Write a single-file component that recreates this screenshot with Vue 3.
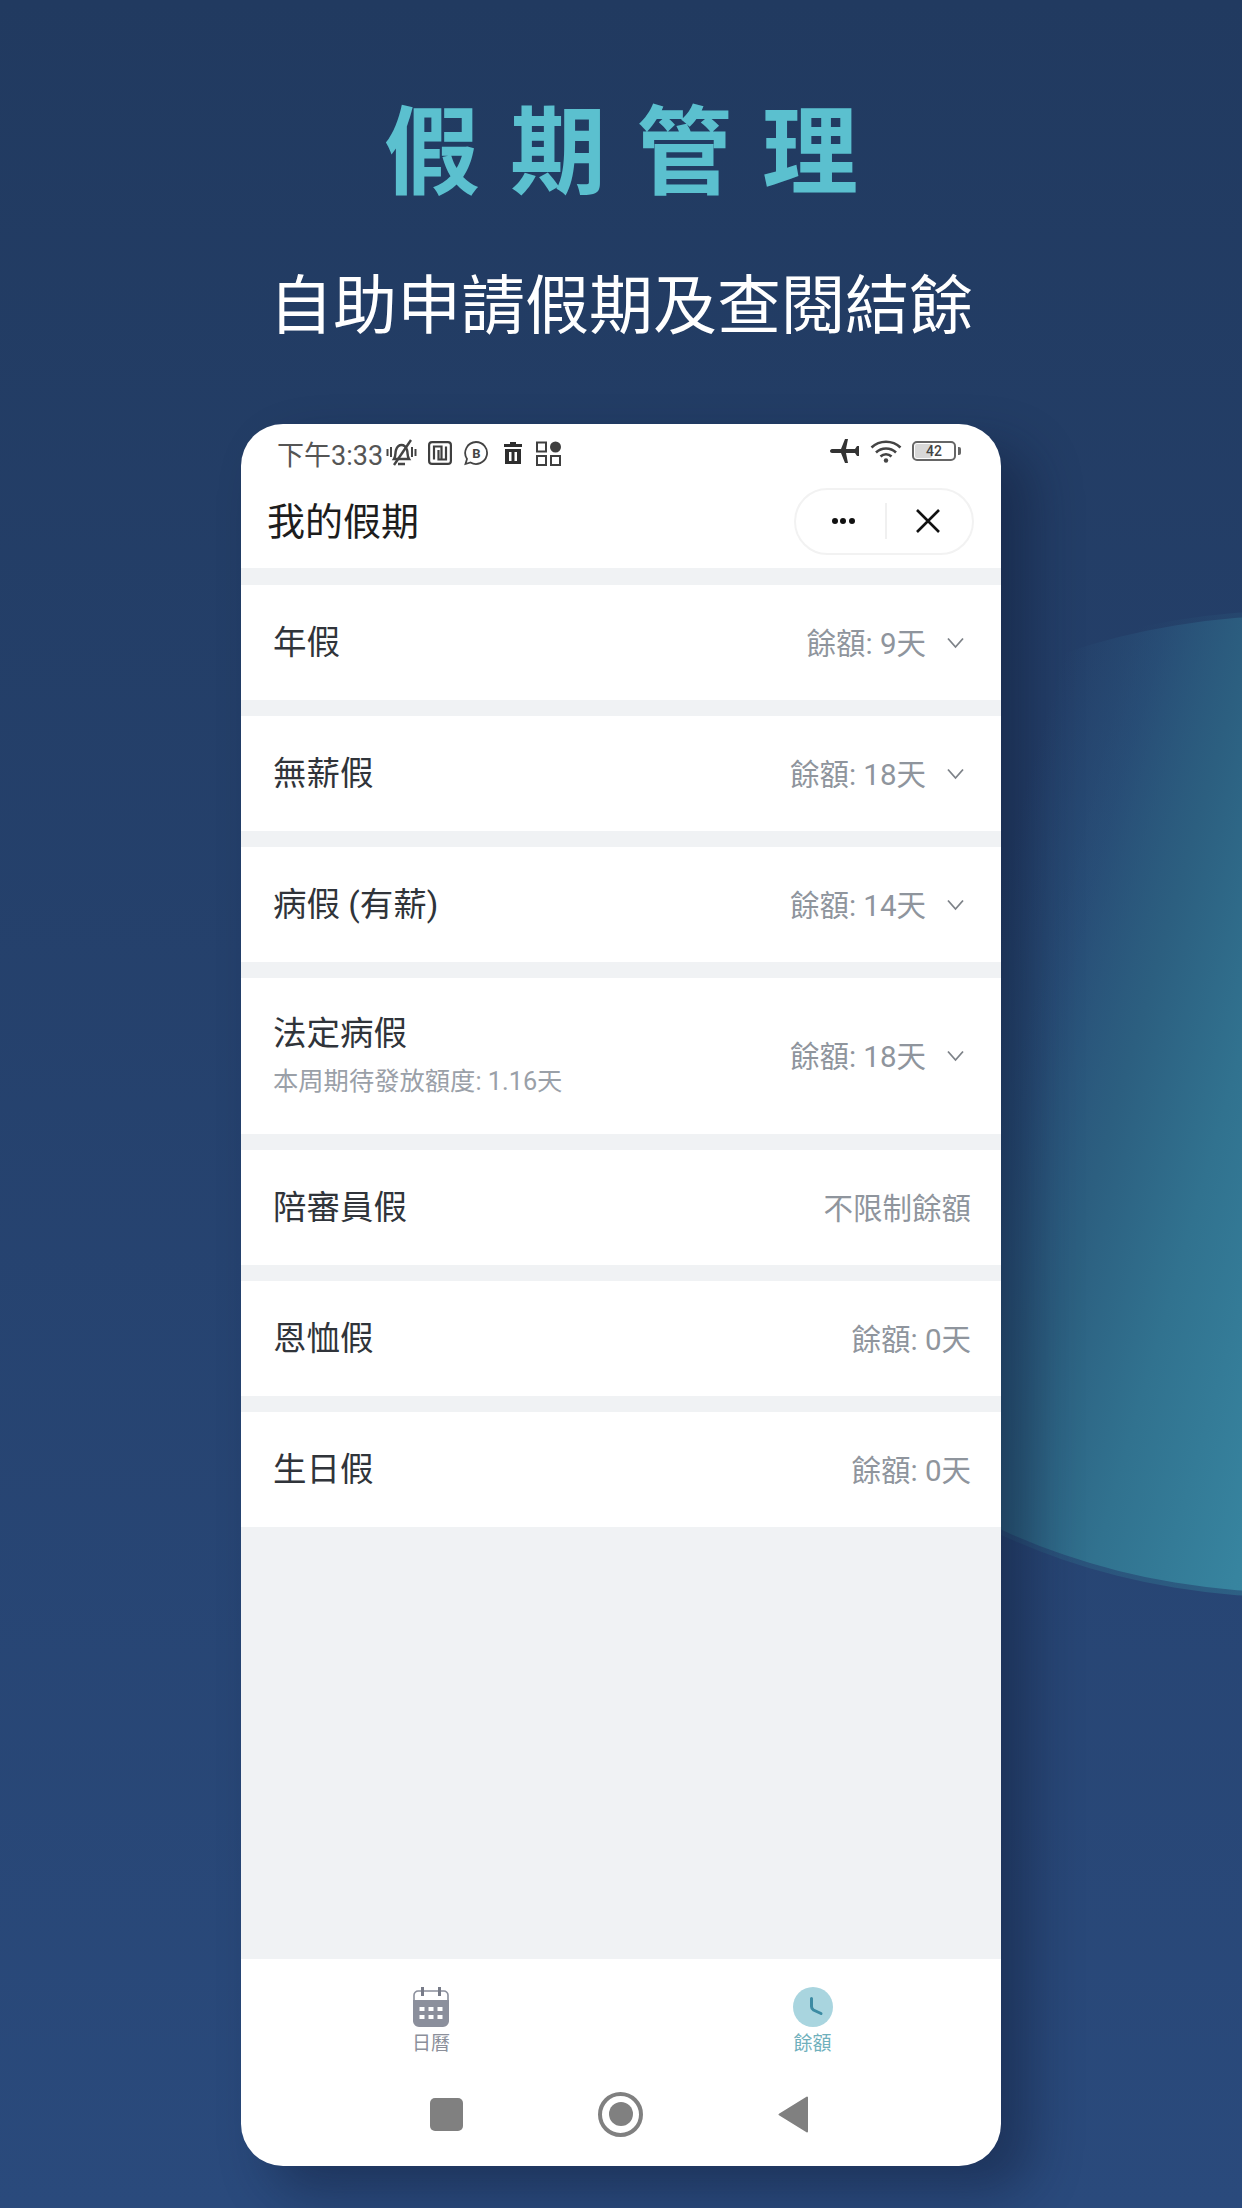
<script setup>
const leaves = [
  { name: '年假', value: '餘額: 9天', more: true },
  { name: '無薪假', value: '餘額: 18天', more: true },
  { name: '病假 (有薪)', value: '餘額: 14天', more: true },
  { name: '法定病假', sub: '本周期待發放額度: 1.16天', value: '餘額: 18天', more: true },
  { name: '陪審員假', value: '不限制餘額' },
  { name: '恩恤假', value: '餘額: 0天' },
  { name: '生日假', value: '餘額: 0天' }
]
</script>

<template>
  <div class="page">
    <div class="blob"></div>

    <h1 class="title">假期管理</h1>
    <p class="subtitle">自助申請假期及查閱結餘</p>

    <div class="phone">
      <!-- status bar -->
      <div class="status">
        <div class="status-left">
          <span class="time">下午3:33</span>
          <svg class="ic-bell" width="31" height="30" viewBox="0 0 31 30" fill="none" stroke="#444" stroke-width="2.400">
            <path d="M8 21c2-3 1-6 2-9 1-3 3-5 5.500-5s4.500 2 5.500 5c1 3 0 6 2 9z" />
            <path d="M12 26h7" />
            <path d="M25 2L8 27" />
            <path d="M1.500 11v7M5 9v10M26 9v10M29.500 11v7" stroke-width="2" />
          </svg>
          <svg class="ic-nfc" width="24" height="24" viewBox="0 0 24 24" fill="none" stroke="#3f3f3f" stroke-width="2.200">
            <rect x="1.100" y="1.100" width="21.800" height="21.800" rx="3" />
            <path d="M6 18.500V5.500h7.500v13M18 5.500v13h-7.500V9" />
          </svg>
          <svg class="ic-biz" width="26" height="26" viewBox="0 0 26 26" fill="none" stroke="#444" stroke-width="1.800">
            <path d="M13 2a11 11 0 1 1-5.500 20.500L2.500 24l1.500-5A11 11 0 0 1 13 2z" />
            <text x="13.500" y="17.500" text-anchor="middle" class="biz-letter">B</text>
          </svg>
          <svg class="ic-trash" width="20" height="22" viewBox="0 0 20 22">
            <path fill="#2e2e2e" d="M7 0h6v2h6v3H1V2h6zM2 7h16v15H2zM6 10v9h2.500v-9zM11.500 10v9H14v-9z" fill-rule="evenodd" />
          </svg>
          <svg class="ic-grid" width="25" height="25" viewBox="0 0 25 25" fill="none" stroke="#3f3f3f" stroke-width="2">
            <rect x="1" y="1.500" width="9" height="9" />
            <rect x="1" y="15" width="9" height="9" />
            <rect x="15" y="15" width="9" height="9" />
            <circle cx="19.500" cy="6" r="5.500" fill="#3f3f3f" stroke="none" />
          </svg>
        </div>
        <div class="status-right">
          <svg width="30" height="24" viewBox="0 0 30 24">
            <path fill="#333" d="M0 12c0-1 1-2 2-2h9L15 0h3l-2 10h9l2-3h2v10h-2l-2-3h-9l2 10h-3l-4-10H2c-1 0-2-1-2-2z" />
          </svg>
          <svg width="32" height="23" viewBox="0 0 32 23" fill="none" stroke="#444" stroke-width="2.600">
            <path d="M1.500 7.500a21 21 0 0 1 29 0" />
            <path d="M6 12.500a14.500 14.500 0 0 1 20 0" />
            <path d="M10.500 16.500a8 8 0 0 1 11 0" />
            <circle cx="16" cy="20.500" r="2.200" fill="#444" stroke="none" />
          </svg>
          <div class="battery">
            <div class="battery-fill"></div>
            <span class="battery-num">42</span>
          </div>
          <div class="battery-tip"></div>
        </div>
      </div>

      <!-- title bar -->
      <div class="head">
        <div class="head-title">我的假期</div>
        <div class="capsule">
          <div class="capsule-btn more">
            <span class="dot"></span><span class="dot"></span><span class="dot"></span>
          </div>
          <div class="capsule-line"></div>
          <div class="capsule-btn close">
            <svg width="26" height="26" viewBox="0 0 26 26" stroke="#111" stroke-width="2.600" fill="none">
              <path d="M2 2l22 22M24 2L2 24" />
            </svg>
          </div>
        </div>
      </div>

      <!-- list -->
      <div class="list">
        <div v-for="item in leaves" :key="item.name" class="row" :class="{ tall: item.sub }">
          <div class="row-left">
            <div class="row-name">{{ item.name }}</div>
            <div v-if="item.sub" class="row-sub">{{ item.sub }}</div>
          </div>
          <div class="row-right">
            <span class="row-value">{{ item.value }}</span>
            <svg v-if="item.more" class="chevron" width="24" height="12" viewBox="0 0 24 12" fill="none" stroke="#7d8288" stroke-width="1.800">
              <path d="M1 1.500L8.500 10l7.500-8.500" />
            </svg>
          </div>
        </div>
      </div>

      <!-- tabs -->
      <div class="tabs">
        <div class="tab">
          <svg width="36" height="40" viewBox="0 0 36 40">
            <path d="M1 15V8c0-2 2-4 4-4h26c2 0 4 2 4 4v7" fill="none" stroke="#8b8f9c" stroke-width="1.600" />
            <path d="M0 13h36v21c0 3-3 6-6 6H6c-3 0-6-3-6-6z" fill="#8b8f9c" />
            <path d="M9.500 0v9M26.500 0v9" stroke="#777b88" stroke-width="3" />
            <g fill="#fff">
              <rect x="6.500" y="20" width="5" height="4" />
              <rect x="15.500" y="20" width="5" height="4" />
              <rect x="24.500" y="20" width="5" height="4" />
              <rect x="6.500" y="28" width="5" height="4" />
              <rect x="15.500" y="28" width="5" height="4" />
              <rect x="24.500" y="28" width="5" height="4" />
            </g>
          </svg>
          <span class="tab-label">日曆</span>
        </div>
        <div class="tab active">
          <svg width="40" height="40" viewBox="0 0 40 40">
            <circle cx="20" cy="20" r="20" fill="#a9d5df" />
            <path d="M18.500 11.500v8c0 1.500.5 2.500 2 3.500l7.500 3.500" fill="none" stroke="#3c8ba3" stroke-width="3" stroke-linecap="round" />
          </svg>
          <span class="tab-label">餘額</span>
        </div>
      </div>

      <!-- android nav -->
      <div class="navbar">
        <div class="nav-square"></div>
        <div class="nav-circle"><div class="nav-circle-in"></div></div>
        <svg width="30" height="37" viewBox="0 0 30 37">
          <path fill="#808080" stroke="#808080" stroke-width="2" stroke-linejoin="round" d="M29 1.500v34L1.500 18.500z" />
        </svg>
      </div>
    </div>
  </div>
</template>

<style>
html, body {
  margin: 0;
  background: #213a60;
}
</style>

<style scoped>
.page {
  position: relative;
  isolation: isolate;
  height: 2208px;
  overflow: hidden;
  display: flex;
  flex-direction: column;
  align-items: center;
  padding-top: 105px;
  box-sizing: border-box;
  background: linear-gradient(180deg, #213a60 0%, #2a4a7c 100%);
  font-family: "Roboto", "Noto Sans CJK TC", sans-serif;
}

/* teal shape behind the phone */
.blob {
  position: absolute;
  left: 700px;
  top: 616px;
  width: 1180px;
  height: 976px;
  border-radius: 50%;
  background: linear-gradient(106deg, rgba(37, 66, 107, 0) 360px, rgba(42, 85, 125, 0.6) 450px, #2c5f80 535px, #31728f 640px, #37849f 780px, #3a8ba6 900px);
}

.blob::before {
  content: "";
  position: absolute;
  inset: -5px;
  border-radius: 50%;
  background: linear-gradient(106deg, rgba(37, 66, 107, 0) 430px, rgba(44, 95, 128, 0.35) 560px, rgba(49, 114, 143, 0.6) 800px);
  z-index: -1;
}

.title {
  position: relative;
  margin: 0;
  padding-left: 30px;
  font-size: 96px;
  line-height: 96px;
  font-weight: 700;
  letter-spacing: 30px;
  color: #5bc0cf;
}

.subtitle {
  position: relative;
  margin: 74px 0 0;
  font-size: 64px;
  line-height: 64px;
  font-weight: 400;
  color: #fff;
}

.phone {
  position: relative;
  margin-top: 85px;
  width: 760px;
  height: 1742px;
  border-radius: 42px;
  background: #fff;
  box-shadow: 30px 25px 50px rgba(14, 24, 50, 0.42);
  display: flex;
  flex-direction: column;
  overflow: hidden;
}

.status {
  height: 58px;
  display: flex;
  align-items: center;
  justify-content: space-between;
  padding: 0 40px 0 36px;
}

.status-left,
.status-right {
  display: flex;
  align-items: center;
}

.status-right {
  gap: 10px;
  margin-top: -4px;
}

.time {
  font-size: 27px;
  color: #555;
  margin-right: 3px;
}

.ic-nfc { margin-left: 11px; }
.ic-biz { margin-left: 11px; }
.ic-trash { margin-left: 14px; }
.ic-grid { margin-left: 13px; }

.biz-letter {
  font-size: 13px;
  font-weight: 700;
  fill: #444;
  stroke: none;
}

.battery {
  position: relative;
  width: 44px;
  height: 20px;
  border: 2px solid #666;
  border-radius: 5px;
  box-sizing: border-box;
  display: flex;
  align-items: center;
  justify-content: center;
}

.battery-fill {
  position: absolute;
  left: 1px;
  top: 1px;
  bottom: 1px;
  width: 17px;
  background: #d8d8d8;
  border-radius: 2px;
}

.battery-num {
  position: relative;
  font-size: 14px;
  font-weight: 500;
  color: #444;
}

.battery-tip {
  width: 3px;
  height: 8px;
  background: #666;
  margin-left: -8px;
  border-radius: 0 2px 2px 0;
}

.head {
  height: 86px;
  padding: 0 27px 8px 26px;
  box-sizing: border-box;
  display: flex;
  align-items: center;
  justify-content: space-between;
}

.head-title {
  font-size: 38px;
  padding-bottom: 5px;
  color: #1d1d1d;
}

.capsule {
  width: 180px;
  height: 67px;
  box-sizing: border-box;
  border: 2px solid #f2f2f2;
  border-radius: 34px;
  display: flex;
  align-items: center;
}

.capsule-btn {
  flex: 1;
  display: flex;
  align-items: center;
  justify-content: center;
  gap: 2.500px;
}

.capsule-btn.more {
  padding-left: 6px;
}

.capsule-btn.close {
  padding-right: 3px;
}

.capsule-line {
  width: 2px;
  height: 36px;
  background: #f0f0f0;
}

.dot {
  width: 6px;
  height: 6px;
  border-radius: 50%;
  background: #111;
}

.list {
  flex: 1;
  background: #f0f2f4;
  padding-top: 17px;
  display: flex;
  flex-direction: column;
  gap: 16px;
}

.row {
  height: 115px;
  background: #fff;
  display: flex;
  align-items: center;
  justify-content: space-between;
  padding: 0 30px 0 32px;
}

.row.tall {
  height: 156px;
}

.row-name {
  font-size: 33.500px;
  line-height: 44px;
  color: #30343a;
}

.row-sub {
  font-size: 25.300px;
  line-height: 36px;
  color: #9aa0a8;
  margin-top: 8px;
}

.row-right {
  display: flex;
  align-items: center;
  gap: 21px;
}

.row-value {
  font-size: 29.500px;
  padding-bottom: 4px;
  color: #8f959d;
}

.tabs {
  height: 120px;
  display: grid;
  grid-template-columns: 1fr 1fr;
  background: #fff;
  padding-top: 28px;
  box-sizing: border-box;
}

.tab {
  display: flex;
  flex-direction: column;
  align-items: center;
  gap: 4px;
}

.tab.active {
  margin-left: 3px;
}

.tab-label {
  font-size: 19px;
  line-height: 26px;
  color: #8b8f9a;
}

.tab.active .tab-label {
  color: #6fb0bc;
}

.navbar {
  height: 87px;
  padding: 0 4px 17px 0;
  box-sizing: border-box;
  display: flex;
  align-items: center;
  justify-content: center;
  gap: 135px;
}

.nav-square {
  width: 33px;
  height: 33px;
  border-radius: 5px;
  background: #808080;
}

.nav-circle {
  width: 45px;
  height: 45px;
  box-sizing: border-box;
  border: 4px solid #808080;
  border-radius: 50%;
  display: flex;
  align-items: center;
  justify-content: center;
}

.nav-circle-in {
  width: 24px;
  height: 24px;
  border-radius: 50%;
  background: #808080;
}
</style>
